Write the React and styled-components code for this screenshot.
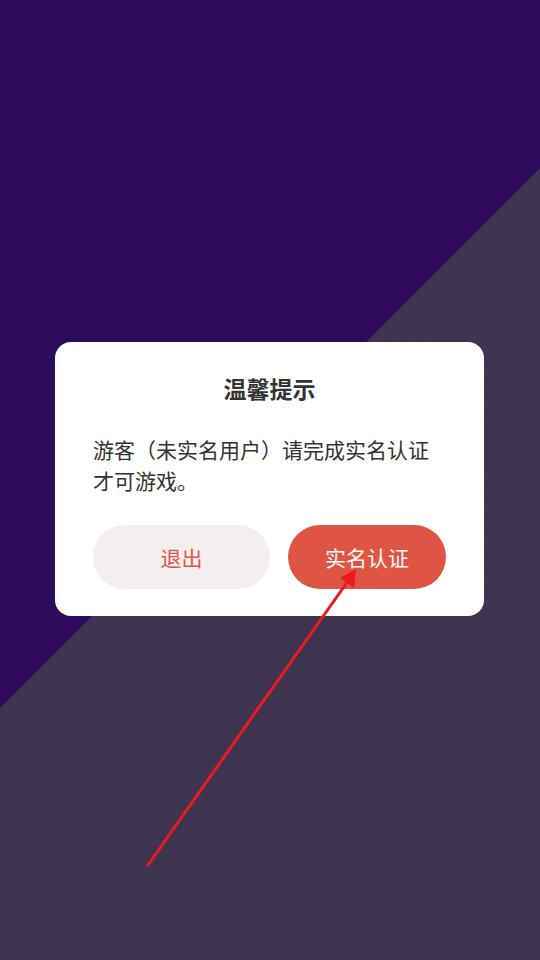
import React from 'react';
import styled, { createGlobalStyle } from 'styled-components';

const GlobalStyle = createGlobalStyle`
    html, body {
        margin: 0;
        padding: 0;
    }
    body {
        font-family: "Noto Sans CJK SC", "Noto Sans", sans-serif;
    }
`;

const Screen = styled.div`
    position: relative;
    width: 540px;
    height: 960px;
    overflow: hidden;
    background-color: #2e0a5c;
    display: flex;
    align-items: flex-start;
    justify-content: flex-start;
    padding: 342px 0 0 55px;
    box-sizing: border-box;
    &::before {
        content: '';
        position: absolute;
        inset: 0;
        background-color: #3d3350;
        background-image: repeating-linear-gradient(
            -45deg,
            rgba(255, 255, 255, 0.02) 0px,
            rgba(255, 255, 255, 0.02) 1px,
            transparent 1px,
            transparent 3px
        );
        clip-path: polygon(540px 168px, 540px 960px, 0 960px, 0 708px);
    }
`;

const Dialog = styled.div`
    position: relative;
    z-index: 1;
    width: 429px;
    height: 274px;
    box-sizing: border-box;
    background: #ffffff;
    border-radius: 16px;
    padding: 29px 38px 27px 38px;
    display: flex;
    flex-direction: column;
`;

const Title = styled.h2`
    margin: 0;
    text-align: center;
    font-size: 23px;
    line-height: 34px;
    font-weight: 700;
    color: #333333;
`;

const Message = styled.p`
    margin: 29px 0 0 0;
    font-size: 21px;
    line-height: 31px;
    color: #333333;
    height: 62px;
`;

const Actions = styled.div`
    display: grid;
    grid-template-columns: 177px 158px;
    column-gap: 18px;
    margin-top: auto;
`;

const ActionButton = styled.button`
    height: 64px;
    border: none;
    border-radius: 32px;
    font-family: inherit;
    font-size: 21px;
    padding: 0;
    cursor: pointer;
    background-color: ${props => props.$primary ? '#df5543' : '#f4efee'};
    color: ${props => props.$primary ? '#fff8f4' : '#e0554a'};
`;

const Pointer = styled.svg`
    position: absolute;
    inset: 0;
    z-index: 2;
    pointer-events: none;
`;

export default function App() {
    return (
        <Screen>
            <GlobalStyle />
            <Dialog>
                <Title>温馨提示</Title>
                <Message>游客（未实名用户）请完成实名认证<br />才可游戏。</Message>
                <Actions>
                    <ActionButton>退出</ActionButton>
                    <ActionButton $primary>实名认证</ActionButton>
                </Actions>
            </Dialog>
            <Pointer width="540" height="960" viewBox="0 0 540 960">
                <line x1="148" y1="865" x2="348" y2="581" stroke="#ea1a1f" strokeWidth="3" strokeLinecap="round" />
                <polygon points="356,569 354,588 340,578" fill="#ea1a1f" />
            </Pointer>
        </Screen>
    );
}
